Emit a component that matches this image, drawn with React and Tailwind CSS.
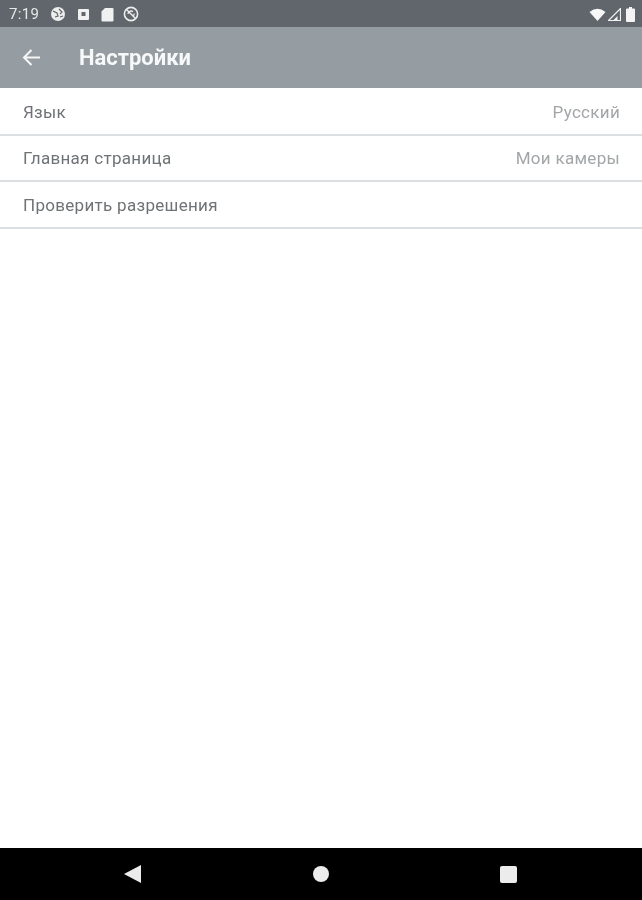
import React from "react";

const font = { fontFamily: '"Roboto", "Liberation Sans", sans-serif' };

function Row({ label, value, cls }) {
  return (
    <div className={"flex items-center justify-between border-b-2 border-[#dcdfe1] pl-[23px] pr-[22px] text-[17px] tracking-[0.3px] " + cls}>
      <span className="text-[#6f7375]">{label}</span>
      {value && <span className="text-[#a3a6a8]">{value}</span>}
    </div>
  );
}

export default function App() {
  return (
    <div className="flex h-[900px] w-[642px] flex-col overflow-hidden bg-white [filter:blur(0.5px)]" style={font}>
      <div className="flex h-[27px] items-center justify-between bg-[#60666b] pl-[9px] pr-[7px] pt-[1px] text-white">
        <div className="flex items-center">
          <span className="text-[15px] tracking-[0.3px] text-[#e6e8e9]">7:19</span>
          <svg className="ml-[11px]" width="16" height="16" viewBox="0 0 16 16">
            <circle cx="8" cy="8" r="7" fill="#eceded" />
            <path d="M3 5l4 2 1 3-3 1M9 3l3 3-2 2M10 11l3-1" stroke="#60666b" strokeWidth="1.2" fill="none" />
          </svg>
          <svg className="ml-[11px]" width="13" height="13" viewBox="0 0 13 13">
            <rect x="1" y="1" width="11" height="11" rx="1" fill="#f0f1f1" />
            <rect x="4.5" y="4" width="4" height="4" fill="#60666b" />
          </svg>
          <svg className="ml-[11px]" width="13" height="15" viewBox="0 0 13 15">
            <path d="M4 1h7.5a1 1 0 0 1 1 1v11.5a1 1 0 0 1-1 1h-10a1 1 0 0 1-1-1V4.5z" fill="#f0f1f1" />
          </svg>
          <svg className="ml-[9px]" width="16" height="16" viewBox="0 0 16 16" fill="none" stroke="#eceded">
            <circle cx="8" cy="8" r="6.6" strokeWidth="1.6" />
            <path d="M3.5 3.5l9 9" strokeWidth="1.4" />
            <path d="M5 8a3.2 3.2 0 0 1 5-2.4M11 7.5a3 3 0 0 1-1 3" strokeWidth="1.4" />
          </svg>
        </div>
        <div className="flex items-center">
          <svg width="17" height="13" viewBox="0 0 17 13">
            <path d="M0.5 4Q8.5-2.5 16.5 4L8.5 13z" fill="#f7f7f7" />
          </svg>
          <svg className="ml-[2px]" width="13" height="13" viewBox="0 0 13 13">
            <path d="M0.5 12.5L12.5 0.5V12.5z" fill="none" stroke="#f0f1f1" strokeWidth="1.2" />
            <path d="M5 12.5L9.5 8V12.5z" fill="#f0f1f1" />
          </svg>
          <svg className="ml-[5px]" width="9" height="15" viewBox="0 0 9 15">
            <path d="M3 0h3v1.5h2a1 1 0 0 1 1 1V14a1 1 0 0 1-1 1H1a1 1 0 0 1-1-1V2.5a1 1 0 0 1 1-1h2z" fill="#f4f4f4" />
          </svg>
        </div>
      </div>
      <div className="flex h-[61px] items-center bg-[#959ca2]">
        <svg className="ml-[22px]" width="19" height="19" viewBox="0 0 19 19" fill="none" stroke="#f5f6f6" strokeWidth="2">
          <path d="M18 9.5H2M9.5 2L2 9.5 9.5 17" />
        </svg>
        <span className="ml-[38px] text-[22px] font-bold text-[#f7f8f8]">Настройки</span>
      </div>
      <div className="flex-1">
        <Row label="Язык" value="Русский" cls="h-[48px] pt-[3px]" />
        <Row label="Главная страница" value="Мои камеры" cls="h-[46px] pt-[2px]" />
        <Row label="Проверить разрешения" cls="h-[47px] pt-[2px]" />
      </div>
      <div className="flex h-[52px] items-center bg-black">
        <svg className="ml-[124px]" width="17" height="18" viewBox="0 0 17 18">
          <path d="M17 0V18L0 9z" fill="#ececec" />
        </svg>
        <div className="ml-[172px] h-[16px] w-[16px] rounded-full bg-[#ececec]" />
        <div className="ml-[171px] h-[17px] w-[17px] rounded-[2px] bg-[#ececec]" />
      </div>
    </div>
  );
}
